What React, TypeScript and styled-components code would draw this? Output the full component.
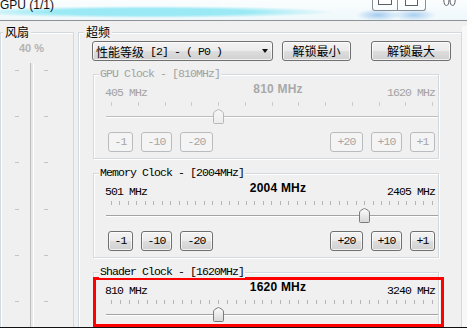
import React from 'react'
import styled, { createGlobalStyle } from 'styled-components'

const mono = `"Liberation Mono", "Noto Sans CJK SC", monospace`
const cjk = `"Noto Sans CJK SC", "Liberation Sans", sans-serif`

const GlobalStyle = createGlobalStyle`
  html, body {
    margin: 0;
    padding: 0;
    background: #f0f0f0;
  }
  body {
    font-family: "Liberation Sans", Arial, sans-serif;
  }
`

type Clock = {
  name: string
  current: number
  min: number
  max: number
  ticks: number
  disabled?: boolean
  highlight?: boolean
  // the shader panel's step buttons fall below the window edge
  hideSteps?: boolean
}

const clocks: Clock[] = [
  { name: 'GPU Clock', current: 810, min: 405, max: 1620, ticks: 12, disabled: true },
  { name: 'Memory Clock', current: 2004, min: 501, max: 2405, ticks: 38 },
  { name: 'Shader Clock', current: 1620, min: 810, max: 3240, ticks: 36, highlight: true, hideSteps: true },
]

const stepWidths: Record<number, number> = { 1: 25, 10: 31, 20: 33 }
const THUMB_RANGE = 321

const Window = styled.div`
  width: 467px;
  height: 328px;
  box-sizing: border-box;
  overflow: hidden;
  display: flex;
  flex-direction: column;
  background: #f0f0f0;
  border-bottom: 1px solid #111;
`

const TitleBar = styled.div`
  flex: none;
  height: 20px;
  display: flex;
  align-items: flex-start;
  border-bottom: 1px solid #8e9297;
  background:
    radial-gradient(22px 6px at 378px 15px, rgba(100, 165, 230, 0.55), transparent),
    radial-gradient(22px 6px at 414px 15px, rgba(100, 165, 230, 0.5), transparent),
    radial-gradient(185px 6px at 150px 12px, rgba(150, 232, 244, 0.95) 55%, rgba(150, 232, 244, 0)),
    linear-gradient(180deg, #fbfdfe 0%, #eef8fb 100%);
`

const Title = styled.div`
  margin-top: -1px;
  font-size: 12px;
  line-height: 12px;
  color: #111;
  white-space: nowrap;
`

const Controls = styled.div`
  margin-left: auto;
  margin-right: 5px;
  display: flex;
`

const CtlButton = styled.div<{ $w: number; $edge: 'min' | 'max' | 'close' }>`
  width: ${p => p.$w}px;
  height: 11px;
  box-sizing: border-box;
  display: flex;
  align-items: flex-start;
  border-bottom: ${p => (p.$edge === 'close' ? '0' : '1px solid #8a8f95')};
  border-left: ${p => (p.$edge === 'min' ? '1px solid #8a8f95' : '0')};
  border-right: ${p => (p.$edge === 'close' ? '0' : '1px solid #8a8f95')};
  border-radius: ${p => (p.$edge === 'min' ? '0 0 0 3px' : p.$edge === 'max' ? '0 0 3px 0' : '0')};
  background: ${p => (p.$edge === 'close' ? 'transparent' : 'rgba(255, 255, 255, 0.45)')};
  padding-left: ${p => (p.$edge === 'close' ? '17px' : '0')};
  justify-content: ${p => (p.$edge === 'close' ? 'flex-start' : 'center')};
`

const CtlGlyph = styled.span<{ $w: number; $h: number }>`
  width: ${p => p.$w}px;
  height: ${p => p.$h}px;
  box-sizing: border-box;
  border: 1px solid #5a5f66;
  border-top: 0;
  border-radius: 0 0 1px 1px;
  background: #fff;
`

const Body = styled.div`
  flex: 1;
  min-height: 0;
  display: flex;
  padding-top: 5px;
  overflow: hidden;
`

const GroupColumn = styled.div<{ $width: number; $offset?: number }>`
  flex: none;
  width: ${p => p.$width}px;
  margin-left: ${p => p.$offset ?? 0}px;
  display: flex;
  flex-direction: column;
  min-height: 0;
`

const GroupLabel = styled.div<{ $indent: number }>`
  align-self: flex-start;
  position: relative;
  z-index: 1;
  height: 12px;
  margin: 0 0 -6px ${p => p.$indent}px;
  padding: 0 2px;
  font-family: ${cjk};
  font-size: 12px;
  line-height: 12px;
  color: #000;
  background: #f0f0f0;
`

const GroupFrame = styled.div`
  flex: 1;
  min-height: 0;
  overflow: hidden;
  display: flex;
  flex-direction: column;
  border: 1px solid #d3d9dc;
  border-bottom: 0;
  box-shadow: inset 1px 1px 0 #fff;
`

const FanContent = styled.div`
  display: flex;
  flex-direction: column;
  align-items: center;
  padding: 9px 11px 0 0;
`

const FanValue = styled.div`
  font-size: 11px;
  font-weight: bold;
  line-height: 12px;
  color: #b3b3b3;
`

const FanSlider = styled.div`
  margin-top: 9px;
  height: 270px;
  display: grid;
  grid-template-columns: 4px 3px 4px;
  gap: 0 11px;
`

const FanTicks = styled.div`
  background: repeating-linear-gradient(180deg, transparent 0 7px, #c4c4c4 7px 8px, transparent 8px 46.2px);
`

const FanTrack = styled.div`
  box-sizing: border-box;
  border-left: 1px solid #bcbcbc;
  border-right: 1px solid #fff;
  background: #e8e8e8;
  margin-right: -1px;
`

const OverclockContent = styled.div`
  display: flex;
  flex-direction: column;
  padding: 8px 0 0 13px;
`

const TopRow = styled.div`
  display: flex;
  height: 20px;
`

const winButton = `
  box-sizing: border-box;
  height: 20px;
  border: 1px solid #707070;
  border-radius: 3px;
  background: linear-gradient(180deg, #f3f3f3 0%, #ebebeb 48%, #dddddd 52%, #d0d0d0 100%);
  box-shadow: inset 0 0 0 1px rgba(255, 255, 255, 0.7);
`

const Dropdown = styled.div`
  ${winButton}
  width: 181px;
  display: flex;
  align-items: center;
  padding-left: 3px;
  font-family: ${cjk};
  font-size: 12px;
  color: #000;
  white-space: pre;
`

const MonoText = styled.span`
  font-family: ${mono};
  font-size: 11.5px;
  letter-spacing: -0.9px;
`

const Arrow = styled.span`
  margin-left: auto;
  margin-right: 4px;
  width: 0;
  height: 0;
  border-left: 3px solid transparent;
  border-right: 3px solid transparent;
  border-top: 4px solid #111;
`

const UnlockButton = styled.button<{ $w: number; $gap: number }>`
  ${winButton}
  width: ${p => p.$w}px;
  margin: 0 0 0 ${p => p.$gap}px;
  padding: 0;
  font-family: ${cjk};
  font-size: 12px;
  line-height: 16px;
  color: #000;
`

const Sections = styled.div`
  margin: 7px 0 0 1px;
  width: 346px;
  display: flex;
  flex-direction: column;
  gap: 8px;
`

const Section = styled.div`
  flex: none;
  display: flex;
  flex-direction: column;
`

const Legend = styled.div<{ $disabled?: boolean }>`
  align-self: flex-start;
  position: relative;
  z-index: 1;
  height: 12px;
  margin: 0 0 -6px 6px;
  padding: 0 1px;
  font-family: ${mono};
  font-size: 11.5px;
  letter-spacing: -0.9px;
  line-height: 12px;
  white-space: pre;
  color: ${p => (p.$disabled ? '#a2a2a2' : '#000')};
  background: #f0f0f0;
`

const ClockFrame = styled.div`
  position: relative;
  height: 85px;
  box-sizing: border-box;
  padding-top: 12px;
  display: flex;
  flex-direction: column;
  border: 1px solid #d3d9dc;
  box-shadow: inset 1px 1px 0 #fff, 1px 1px 0 #fff;
`

const ValueRow = styled.div<{ $disabled?: boolean }>`
  display: grid;
  grid-template-columns: 145px 56px 1fr;
  align-items: start;
  height: 12px;
  margin: 0 3px 0 11px;
  font-family: ${mono};
  font-size: 11.5px;
  letter-spacing: -0.9px;
  line-height: 12px;
  white-space: pre;
  color: ${p => (p.$disabled ? '#a2a2a2' : '#000')};
`

const CurrentValue = styled.span<{ $disabled?: boolean }>`
  justify-self: center;
  margin-top: -4px;
  font-family: "Liberation Sans", Arial, sans-serif;
  font-size: 12px;
  font-weight: bold;
  letter-spacing: 0.2px;
  line-height: 12px;
  color: ${p => (p.$disabled ? '#a9a9a9' : '#000')};
`

const MaxValue = styled.span`
  justify-self: end;
`

const TickRow = styled.div`
  height: 4px;
  margin: 3px 0 0 12px;
  padding: 0 5px;
  display: flex;
  justify-content: space-between;
`

const Tick = styled.span<{ $disabled?: boolean }>`
  width: 1px;
  background: ${p => (p.$disabled ? '#cdcdcd' : '#b4b4b4')};
`

const Slider = styled.div`
  position: relative;
  height: 16px;
  margin: 2px 0 0 12px;
`

const Track = styled.div<{ $disabled?: boolean }>`
  margin-top: 8px;
  height: 2px;
  box-sizing: border-box;
  border-top: 1px solid ${p => (p.$disabled ? '#bdbdbd' : '#a3a3a3')};
  border-bottom: 1px solid #fff;
`

const ThumbWrap = styled.svg`
  position: absolute;
  top: 1px;
`

const ButtonRow = styled.div`
  display: flex;
  justify-content: space-between;
  margin: 8px 3px 0 14px;
`

const StepGroup = styled.div`
  display: flex;
  gap: 8px;
`

const StepButton = styled.button<{ $w: number; $disabled?: boolean }>`
  ${winButton}
  width: ${p => p.$w}px;
  margin: 0;
  padding: 0;
  font-family: ${mono};
  font-size: 11.5px;
  letter-spacing: -0.9px;
  line-height: 16px;
  color: #000;
  ${p =>
    p.$disabled &&
    `
    border-color: #b9bcbf;
    background: #f4f4f4;
    box-shadow: none;
    color: #a6a6a6;
  `}
`

const Highlight = styled.div`
  position: absolute;
  top: 4px;
  left: -1px;
  width: 351px;
  height: 50px;
  box-sizing: border-box;
  border: 3px solid #ff0000;
  pointer-events: none;
`

const Edge = styled.div`
  flex: none;
  width: 5px;
  background: #f8f8f8;
`

const Thumb: React.FC<{ left: number; disabled?: boolean; id: string }> = ({ left, disabled, id }) => (
  <ThumbWrap width="11" height="15" viewBox="0 0 11 15" style={{ left }}>
    <defs>
      <linearGradient id={id} x1="0" y1="0" x2="0" y2="1">
        <stop offset="0" stopColor={disabled ? '#f7f7f7' : '#fdfdfd'} />
        <stop offset="1" stopColor={disabled ? '#ececec' : '#d6d6d6'} />
      </linearGradient>
    </defs>
    <path
      d="M0.5 13.5 V5 Q0.5 3.6 1.6 2.6 L4.4 0.9 Q5.5 0.3 6.6 0.9 L9.4 2.6 Q10.5 3.6 10.5 5 V13.5 Q10.5 14.5 9.5 14.5 H1.5 Q0.5 14.5 0.5 13.5 Z"
      fill={`url(#${id})`}
      stroke={disabled ? '#b8b8b8' : '#7a7a7a'}
    />
  </ThumbWrap>
)

const ClockPanel: React.FC<{ clock: Clock; index: number }> = ({ clock, index }) => {
  const { name, current, min, max, ticks, disabled, highlight, hideSteps } = clock
  const frac = (current - min) / (max - min)
  return (
    <Section>
      <Legend $disabled={disabled}>{`${name} - [${current}MHz]`}</Legend>
      <ClockFrame>
        <ValueRow $disabled={disabled}>
          <span>{`${min} MHz`}</span>
          <CurrentValue $disabled={disabled}>{`${current} MHz`}</CurrentValue>
          <MaxValue>{`${max} MHz`}</MaxValue>
        </ValueRow>
        <TickRow>
          {Array.from({ length: ticks + 1 }, (_, i) => (
            <Tick key={i} $disabled={disabled} />
          ))}
        </TickRow>
        <Slider>
          <Track $disabled={disabled} />
          <Thumb id={`thumb${index}`} left={frac * THUMB_RANGE - 0.5} disabled={disabled} />
        </Slider>
        {!hideSteps && (
          <ButtonRow>
            <StepGroup>
              {[1, 10, 20].map(s => (
                <StepButton key={s} $w={stepWidths[s]} $disabled={disabled}>{`-${s}`}</StepButton>
              ))}
            </StepGroup>
            <StepGroup>
              {[20, 10, 1].map(s => (
                <StepButton key={s} $w={stepWidths[s]} $disabled={disabled}>{`+${s}`}</StepButton>
              ))}
            </StepGroup>
          </ButtonRow>
        )}
        {highlight && <Highlight />}
      </ClockFrame>
    </Section>
  )
}

export default function App() {
  return (
    <>
      <GlobalStyle />
      <Window>
        <TitleBar>
          <Title>GPU (1/1)</Title>
          <Controls>
            <CtlButton $w={26} $edge="min">
              <CtlGlyph $w={14} $h={5} />
            </CtlButton>
            <CtlButton $w={28} $edge="max">
              <CtlGlyph $w={13} $h={6} />
            </CtlButton>
            <CtlButton $w={36} $edge="close">
              <svg width="13" height="7" viewBox="0 0 13 7">
                <path
                  d="M0.8 0 Q1 5.5 3.4 5.5 Q5.8 5.5 6 0 M7 0 Q7.2 5.5 9.6 5.5 Q12 5.5 12.2 0"
                  fill="#fff"
                  stroke="#5a5f66"
                  strokeWidth="1"
                />
              </svg>
            </CtlButton>
          </Controls>
        </TitleBar>
        <Body>
          <GroupColumn $width={74}>
            <GroupLabel $indent={3}>风扇</GroupLabel>
            <GroupFrame>
              <FanContent>
                <FanValue>40 %</FanValue>
                <FanSlider>
                  <FanTicks />
                  <FanTrack />
                  <FanTicks />
                </FanSlider>
              </FanContent>
            </GroupFrame>
          </GroupColumn>
          <GroupColumn $width={384} $offset={4}>
            <GroupLabel $indent={6}>超频</GroupLabel>
            <GroupFrame>
              <OverclockContent>
                <TopRow>
                  <Dropdown>
                    性能等级<MonoText> [2] - ( P0 )</MonoText>
                    <Arrow />
                  </Dropdown>
                  <UnlockButton $w={69} $gap={9}>解锁最小</UnlockButton>
                  <UnlockButton $w={80} $gap={20}>解锁最大</UnlockButton>
                </TopRow>
                <Sections>
                  {clocks.map((c, i) => (
                    <ClockPanel key={c.name} clock={c} index={i} />
                  ))}
                </Sections>
              </OverclockContent>
            </GroupFrame>
          </GroupColumn>
          <Edge />
        </Body>
      </Window>
    </>
  )
}
